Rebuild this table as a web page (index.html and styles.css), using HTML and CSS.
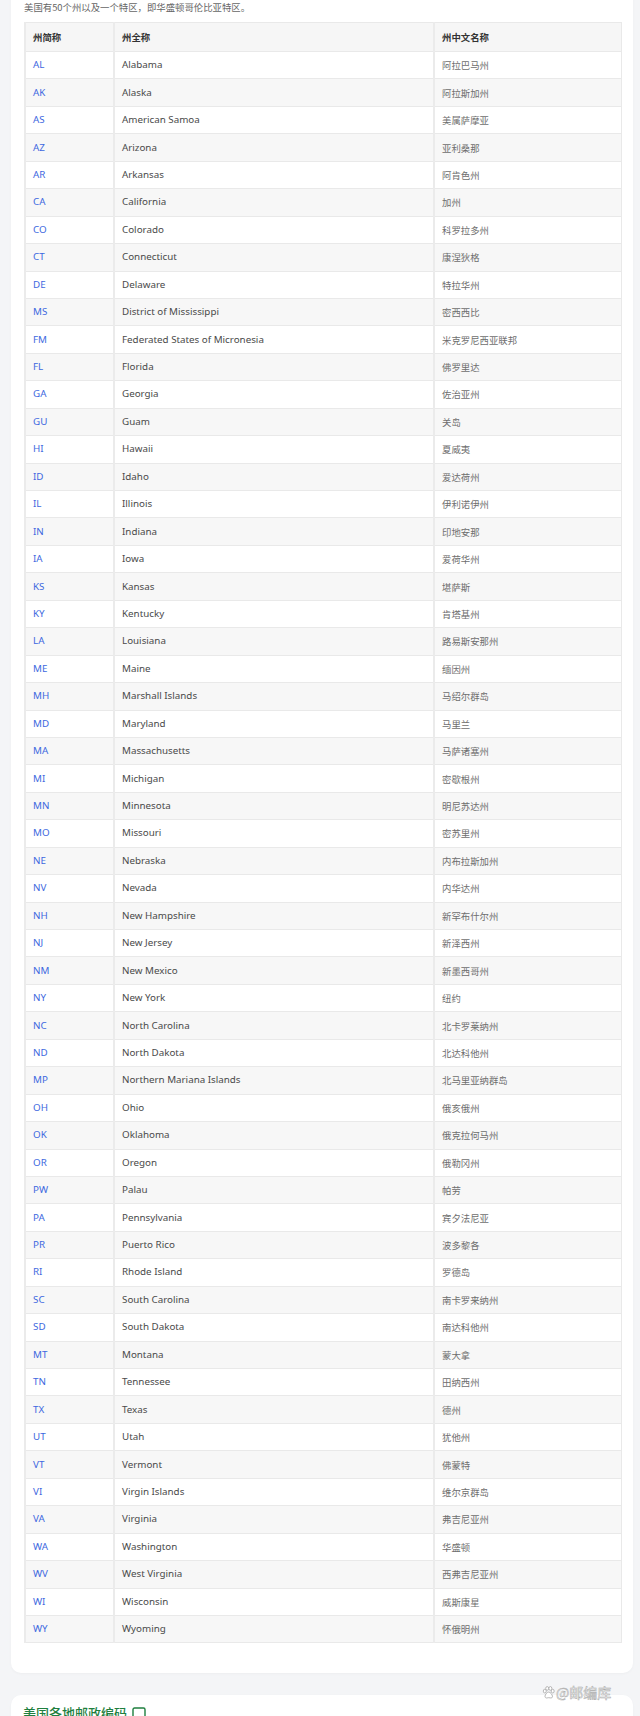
FILE: index.html
```html
<!DOCTYPE html>
<html lang="zh-CN">
<head>
<meta charset="utf-8">
<title>美国州简称</title>
<link rel="stylesheet" href="styles.css">
</head>
<body>
<section class="card card-first">
  <p class="intro">美国有50个州以及一个特区，即华盛顿哥伦比亚特区。</p>
  <table class="states">
    <colgroup><col class="c1"><col class="c2"><col class="c3"></colgroup>
    <thead>
      <tr><th>州简称</th><th>州全称</th><th>州中文名称</th></tr>
    </thead>
    <tbody>
      <tr><td><a>AL</a></td><td>Alabama</td><td>阿拉巴马州</td></tr>
      <tr><td><a>AK</a></td><td>Alaska</td><td>阿拉斯加州</td></tr>
      <tr><td><a>AS</a></td><td>American Samoa</td><td>美属萨摩亚</td></tr>
      <tr><td><a>AZ</a></td><td>Arizona</td><td>亚利桑那</td></tr>
      <tr><td><a>AR</a></td><td>Arkansas</td><td>阿肯色州</td></tr>
      <tr><td><a>CA</a></td><td>California</td><td>加州</td></tr>
      <tr><td><a>CO</a></td><td>Colorado</td><td>科罗拉多州</td></tr>
      <tr><td><a>CT</a></td><td>Connecticut</td><td>康涅狄格</td></tr>
      <tr><td><a>DE</a></td><td>Delaware</td><td>特拉华州</td></tr>
      <tr><td><a>MS</a></td><td>District of Mississippi</td><td>密西西比</td></tr>
      <tr><td><a>FM</a></td><td>Federated States of Micronesia</td><td>米克罗尼西亚联邦</td></tr>
      <tr><td><a>FL</a></td><td>Florida</td><td>佛罗里达</td></tr>
      <tr><td><a>GA</a></td><td>Georgia</td><td>佐治亚州</td></tr>
      <tr><td><a>GU</a></td><td>Guam</td><td>关岛</td></tr>
      <tr><td><a>HI</a></td><td>Hawaii</td><td>夏威夷</td></tr>
      <tr><td><a>ID</a></td><td>Idaho</td><td>爱达荷州</td></tr>
      <tr><td><a>IL</a></td><td>Illinois</td><td>伊利诺伊州</td></tr>
      <tr><td><a>IN</a></td><td>Indiana</td><td>印地安那</td></tr>
      <tr><td><a>IA</a></td><td>Iowa</td><td>爱荷华州</td></tr>
      <tr><td><a>KS</a></td><td>Kansas</td><td>堪萨斯</td></tr>
      <tr><td><a>KY</a></td><td>Kentucky</td><td>肯塔基州</td></tr>
      <tr><td><a>LA</a></td><td>Louisiana</td><td>路易斯安那州</td></tr>
      <tr><td><a>ME</a></td><td>Maine</td><td>缅因州</td></tr>
      <tr><td><a>MH</a></td><td>Marshall Islands</td><td>马绍尔群岛</td></tr>
      <tr><td><a>MD</a></td><td>Maryland</td><td>马里兰</td></tr>
      <tr><td><a>MA</a></td><td>Massachusetts</td><td>马萨诸塞州</td></tr>
      <tr><td><a>MI</a></td><td>Michigan</td><td>密歇根州</td></tr>
      <tr><td><a>MN</a></td><td>Minnesota</td><td>明尼苏达州</td></tr>
      <tr><td><a>MO</a></td><td>Missouri</td><td>密苏里州</td></tr>
      <tr><td><a>NE</a></td><td>Nebraska</td><td>内布拉斯加州</td></tr>
      <tr><td><a>NV</a></td><td>Nevada</td><td>内华达州</td></tr>
      <tr><td><a>NH</a></td><td>New Hampshire</td><td>新罕布什尔州</td></tr>
      <tr><td><a>NJ</a></td><td>New Jersey</td><td>新泽西州</td></tr>
      <tr><td><a>NM</a></td><td>New Mexico</td><td>新墨西哥州</td></tr>
      <tr><td><a>NY</a></td><td>New York</td><td>纽约</td></tr>
      <tr><td><a>NC</a></td><td>North Carolina</td><td>北卡罗莱纳州</td></tr>
      <tr><td><a>ND</a></td><td>North Dakota</td><td>北达科他州</td></tr>
      <tr><td><a>MP</a></td><td>Northern Mariana Islands</td><td>北马里亚纳群岛</td></tr>
      <tr><td><a>OH</a></td><td>Ohio</td><td>俄亥俄州</td></tr>
      <tr><td><a>OK</a></td><td>Oklahoma</td><td>俄克拉何马州</td></tr>
      <tr><td><a>OR</a></td><td>Oregon</td><td>俄勒冈州</td></tr>
      <tr><td><a>PW</a></td><td>Palau</td><td>帕劳</td></tr>
      <tr><td><a>PA</a></td><td>Pennsylvania</td><td>宾夕法尼亚</td></tr>
      <tr><td><a>PR</a></td><td>Puerto Rico</td><td>波多黎各</td></tr>
      <tr><td><a>RI</a></td><td>Rhode Island</td><td>罗德岛</td></tr>
      <tr><td><a>SC</a></td><td>South Carolina</td><td>南卡罗来纳州</td></tr>
      <tr><td><a>SD</a></td><td>South Dakota</td><td>南达科他州</td></tr>
      <tr><td><a>MT</a></td><td>Montana</td><td>蒙大拿</td></tr>
      <tr><td><a>TN</a></td><td>Tennessee</td><td>田纳西州</td></tr>
      <tr><td><a>TX</a></td><td>Texas</td><td>德州</td></tr>
      <tr><td><a>UT</a></td><td>Utah</td><td>犹他州</td></tr>
      <tr><td><a>VT</a></td><td>Vermont</td><td>佛蒙特</td></tr>
      <tr><td><a>VI</a></td><td>Virgin Islands</td><td>维尔京群岛</td></tr>
      <tr><td><a>VA</a></td><td>Virginia</td><td>弗吉尼亚州</td></tr>
      <tr><td><a>WA</a></td><td>Washington</td><td>华盛顿</td></tr>
      <tr><td><a>WV</a></td><td>West Virginia</td><td>西弗吉尼亚州</td></tr>
      <tr><td><a>WI</a></td><td>Wisconsin</td><td>威斯康星</td></tr>
      <tr><td><a>WY</a></td><td>Wyoming</td><td>怀俄明州</td></tr>
    </tbody>
  </table>
</section>
<section class="card card-next">
  <h2 class="section-title">美国各地邮政编码
    <svg class="title-icon" width="14" height="13" viewBox="0 0 14 13"><rect x="1" y="1" width="12" height="11" rx="1.5" fill="none" stroke="#1f7f3f" stroke-width="1.4"/></svg>
  </h2>
</section>
<div class="watermark">
  <svg class="paw" width="13" height="13" viewBox="0 0 14 14">
    <g fill="#fff" stroke="#a8a8a8" stroke-width="0.9">
      <ellipse cx="3" cy="5.5" rx="1.6" ry="2"/>
      <ellipse cx="5.6" cy="2.6" rx="1.6" ry="2"/>
      <ellipse cx="9" cy="2.6" rx="1.6" ry="2"/>
      <ellipse cx="11.5" cy="5.5" rx="1.6" ry="2"/>
      <path d="M7.2 6.5 C5.2 6.5 3.4 9.5 3.2 11 C3 12.6 4.6 13.2 5.6 12.8 C6.5 12.5 8 12.5 8.9 12.8 C10 13.2 11.5 12.6 11.3 11 C11 9.5 9.2 6.5 7.2 6.5 Z"/>
    </g>
  </svg>
  <span class="wm-text">@邮编库</span>
</div>
</body>
</html>
```
FILE: styles.css
```css
html, body {
  margin: 0;
  padding: 0;
}
body {
  background: #f4f5f7;
  font-family: "Noto Sans", "Noto Sans CJK SC", sans-serif;
  font-size: 9.8px;
  color: #4a4a4a;
  position: relative;
  min-height: 1716px;
  overflow: hidden;
}
.card {
  background: #fff;
  border-radius: 10px;
  margin: 0 7px 0 11px;
  box-shadow: 0 1px 3px rgba(0, 0, 0, 0.03);
}
.card-first {
  margin-top: -20px;
  padding: 20px 13px 30px 13px;
}
.card-next {
  margin-top: 22px;
  padding: 9px 13px 20px 12px;
}
.intro {
  margin: 0;
  height: 22px;
  line-height: 14px;
  font-size: 9.4px;
  color: #666;
  font-family: "Noto Sans CJK SC", sans-serif;
}
.states {
  width: 596px;
  table-layout: fixed;
  border-collapse: collapse;
  border: 1px solid #e9e9e9;
}
.states .c1 { width: 89px; }
.states .c2 { width: 320px; }
.states .c3 { width: 187px; }
.states th,
.states td {
  text-align: left;
  padding: 0 6px 0 7px;
  border-left: 2px solid #ebebeb;
  border-bottom: 1px solid #e9e9e9;
  white-space: nowrap;
  overflow: hidden;
  line-height: 14px;
}
.states th {
  height: 28px;
  font-weight: 700;
  font-size: 9.4px;
  color: #333;
  background: #f6f6f6;
  font-family: "Noto Sans CJK SC", sans-serif;
}
.states tr {
  height: 27.45px;
}
.states td {
  color: #4a4a4a;
}
.states td:last-child {
  color: #6e6e6e;
  font-size: 9.4px;
  font-family: "Noto Sans CJK SC", sans-serif;
}
.states tbody tr:nth-child(even) td {
  background: #f7f7f7;
}
.states a {
  color: #3d68e0;
  text-decoration: none;
}
.section-title {
  margin: 0;
  font-size: 13px;
  line-height: 18px;
  font-weight: 500;
  color: #1f7f3f;
  font-family: "Noto Sans CJK SC", sans-serif;
  display: flex;
  align-items: center;
  gap: 5px;
}
.watermark {
  position: absolute;
  left: 542px;
  top: 1684px;
  display: flex;
  align-items: center;
  gap: 1px;
  font-family: "Noto Sans CJK SC", sans-serif;
  font-size: 14px;
  line-height: 16px;
}
.wm-text {
  color: #fff;
  -webkit-text-stroke: 0.5px #a8a8a8;
}
```
